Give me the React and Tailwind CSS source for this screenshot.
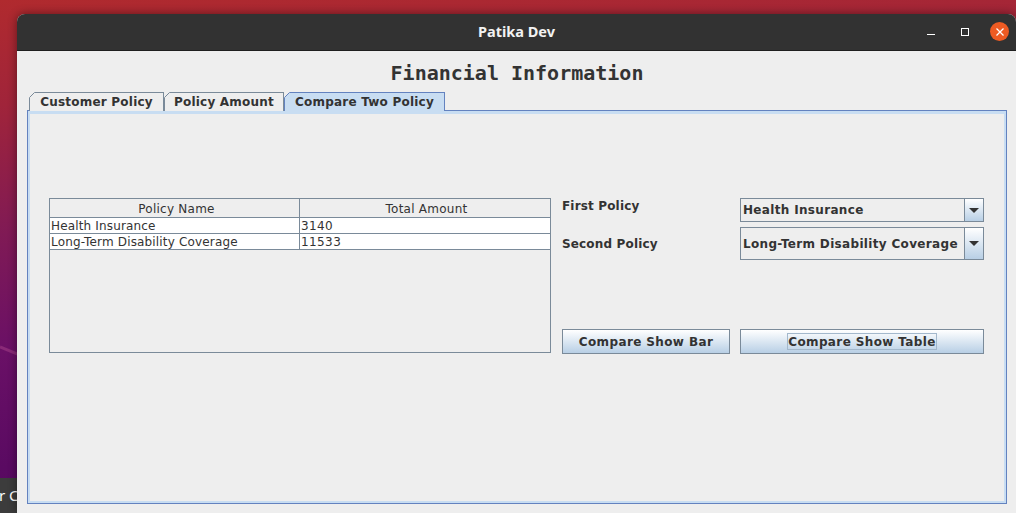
const sans = "font-['DejaVu_Sans',sans-serif]";

const Tab = ({ label, active, width }) => (
  <div
    className={`relative h-[19px] border-t border-r border-l ${width} ${
      active ? "border-[#6382bf] bg-[#c8ddf2]" : "border-[#7a8a99] bg-[#eeeeee]"
    } flex items-center justify-center pb-[1px] text-[12px] font-bold tracking-[0.22px] text-[#333333]`}
  >
    <svg className="absolute -top-px -left-px" width="6" height="6" viewBox="0 0 6 6">
      <path d="M0 0H6L0 6Z" fill="#eeeeee" />
      <path d="M0.5 5.5L5.5 0.5" stroke={active ? "#6382bf" : "#7a8a99"} fill="none" />
    </svg>
    {label}
  </div>
);

const Combo = ({ label, height }) => (
  <div className={`flex ${height} border border-[#7a8a99] bg-[#eeeeee]`}>
    <div className="flex flex-1 items-center whitespace-nowrap pl-[2px] text-[12px] font-bold tracking-[0.33px] text-[#333333]">
      {label}
    </div>
    <div className="flex w-[19px] items-center justify-center border-l border-[#7a8a99] bg-gradient-to-b from-white to-[#b8cfe5]">
      <svg width="10" height="5" viewBox="0 0 10 5">
        <path d="M0 0H10L5 5Z" fill="#333333" />
      </svg>
    </div>
  </div>
);

const Button = ({ label, focused, className }) => (
  <button
    className={`flex h-[25px] items-center justify-center border border-[#7a8a99] bg-gradient-to-b from-white to-[#b8cfe5] text-[12px] font-bold tracking-[0.38px] text-[#333333] ${className}`}
  >
    <span className={`pt-px leading-[14px] ${focused ? "outline outline-1 outline-[#a3b8cc]" : ""}`}>{label}</span>
  </button>
);

const rows = [
  ["Health Insurance", "3140"],
  ["Long-Term Disability Coverage", "11533"],
];

export default function App() {
  return (
    <div className={`relative h-[513px] w-[1016px] overflow-hidden bg-[linear-gradient(176deg,#b02a2e_0%,#a0243a_18%,#801a55_40%,#6a1066_60%,#5a0a62_80%,#500860_100%)] ${sans}`}>
      {/* streak in the wallpaper */}
      <svg className="absolute left-0 top-[340px]" width="20" height="20" viewBox="0 0 20 20">
        <path d="M0 7L20 15" stroke="#8a2a78" strokeWidth="3" fill="none" />
      </svg>

      {/* dock label peeking out from behind the window */}
      <div className="absolute bottom-0 left-0 flex h-[35px] w-[17px] items-center overflow-hidden bg-[#3c3c3c] text-[15px] text-white">
        <span className="-ml-[1px] whitespace-nowrap font-['Noto_Sans',sans-serif]">r C</span>
      </div>

      <div className="absolute left-[17px] top-[14px] flex h-[499px] w-[999px] flex-col overflow-hidden rounded-t-[8px] bg-[#eeeeee] shadow-[0_0_10px_rgba(0,0,0,0.45)]">
        <div className="relative flex h-[37px] shrink-0 items-center justify-center border-b border-[#1f1f1f] bg-[#323232] pb-[1px] font-['Noto_Sans',sans-serif] text-[14.5px] font-bold text-[#f2f2f2]">
          Patika Dev
          <div className="absolute left-[909px] top-[13px] flex items-start">
            <svg width="10" height="10" viewBox="0 0 10 10">
              <path d="M1 7.5H9" stroke="#ffffff" fill="none" />
            </svg>
            <svg width="10" height="10" viewBox="0 0 10 10" className="ml-[24px]">
              <rect x="1.5" y="1.5" width="7" height="7" stroke="#ffffff" fill="none" />
            </svg>
            <div className="-mt-[5px] ml-[20px] flex h-[19px] w-[19px] items-center justify-center rounded-full bg-[#ee5b23]">
              <svg width="10" height="10" viewBox="0 0 10 10">
                <path d="M1.5 1.5L8.5 8.5M8.5 1.5L1.5 8.5" stroke="#ffffff" strokeWidth="1.3" fill="none" />
              </svg>
            </div>
          </div>
        </div>

        <div className="flex h-[41px] shrink-0 items-center justify-center pl-px pt-[3px] font-['DejaVu_Sans_Mono',monospace] text-[20px] font-bold text-[#333333]">
          Financial Information
        </div>

        <div className="flex pl-[12px]">
          <Tab label="Customer Policy" width="w-[135px]" />
          <Tab label="Policy Amount" width="w-[120px]" />
          <Tab label="Compare Two Policy" width="w-[161px]" active />
        </div>

        <div className="-mt-px ml-[10px] h-[394px] w-[980px] border border-[#6382bf]">
          <div className="h-full border-x-2 border-b-2 border-t-[3px] border-[#c8ddf2] bg-[#eeeeee] pl-[19px] pt-[84px]">
            <div className="flex gap-[11px]">
              <div className="h-[155px] w-[502px] border border-[#7a8a99] text-[12px] leading-[14px] tracking-[0.16px] text-[#333333]">
                <div className="flex h-[19px] border-b border-[#7a8a99] tracking-[0.25px]">
                  <div className="flex w-[250px] items-end justify-center border-r border-[#7a8a99] pb-px pl-[4px]">Policy Name</div>
                  <div className="flex flex-1 items-end justify-center pb-px pl-[3px]">Total Amount</div>
                </div>
                {rows.map(([name, amount]) => (
                  <div key={name} className="flex h-[16px] border-b border-[#7a8a99] bg-white">
                    <div className="flex w-[250px] items-center border-r border-[#7a8a99] pl-px pt-px">{name}</div>
                    <div className="flex flex-1 items-center pl-px pt-px tracking-[0.4px]">{amount}</div>
                  </div>
                ))}
              </div>

              <div className="grid w-[422px] grid-cols-[168px_244px] gap-x-[10px]">
                <div className="h-[22px] pt-px text-[12px] font-bold leading-[15px] tracking-[0.16px] text-[#333333]">First Policy</div>
                <Combo label="Health Insurance" height="h-[24px]" />
                <div className="mt-[5px] flex h-[33px] items-center text-[12px] font-bold tracking-[0.16px] text-[#333333]">Second Policy</div>
                <div className="mt-[5px]">
                  <Combo label="Long-Term Disability Coverage" height="h-[33px]" />
                </div>
                <div className="col-span-2 mt-[69px] flex gap-[10px]">
                  <Button label="Compare Show Bar" className="w-[168px]" />
                  <Button label="Compare Show Table" className="w-[244px]" focused />
                </div>
              </div>
            </div>
          </div>
        </div>
      </div>
    </div>
  );
}
